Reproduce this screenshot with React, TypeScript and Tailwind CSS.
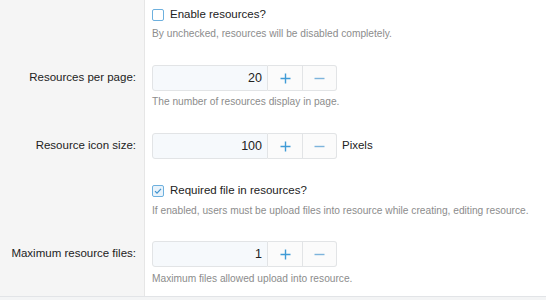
import React from "react";

const font = { fontFamily: '"Liberation Sans", Arial, sans-serif' };

function Stepper({ value }: { value: string }) {
  return (
    <div className="flex h-[26px]">
      <div className="w-[116px] h-full bg-[#f6f9fc] border border-[#e2e4e6] rounded-l-[3px] flex items-center justify-end pr-[5px] text-[12.5px] text-[#222]">
        {value}
      </div>
      <div className="w-[35px] h-full bg-[#fbfbfb] border-y border-r border-[#e2e4e6] flex items-center justify-center">
        <svg width="11" height="11" viewBox="0 0 11 11">
          <path d="M5.5 0.5v10M0.5 5.5h10" stroke="#3f9bd6" strokeWidth="1.4" />
        </svg>
      </div>
      <div className="w-[34px] h-full bg-[#fbfbfb] border-y border-r border-[#e2e4e6] rounded-r-[3px] flex items-center justify-center">
        <svg width="11" height="11" viewBox="0 0 11 11">
          <path d="M0.5 5.5h10" stroke="#7db4dc" strokeWidth="1.4" />
        </svg>
      </div>
    </div>
  );
}

function Check({ checked, label }: { checked: boolean; label: string }) {
  return (
    <div className="flex items-center h-[16px]">
      <div
        className={
          checked
            ? "w-[12px] h-[12px] border border-[#6db0de] bg-[#e9f3fb] rounded-[2px] flex items-center justify-center"
            : "w-[12px] h-[12px] border border-[#6db0de] bg-white rounded-[2px]"
        }
      >
        {checked && (
          <svg width="8" height="8" viewBox="0 0 8 8">
            <path d="M1 4.2l2 2 4-4.4" stroke="#3f93cf" strokeWidth="1.2" fill="none" />
          </svg>
        )}
      </div>
      <span className="ml-[6px] text-[11.5px] text-[#222] whitespace-nowrap">{label}</span>
    </div>
  );
}

function Hint({ children, mt }: { children: React.ReactNode; mt: string }) {
  return <div className={mt + " h-[14px] leading-[14px] text-[10.2px] text-[#8c8c8c] whitespace-nowrap"}>{children}</div>;
}

export default function App() {
  return (
    <div style={font} className="w-[546px] h-[300px] bg-[#f3f4f5] overflow-hidden">
      <div className="bg-white border-b border-[#e2e4e7]">
        {/* Row A */}
        <div className="flex">
          <div className="w-[145px] shrink-0 bg-[#f5f5f5] border-r border-[#e6e6e6]" />
          <div className="pl-[7px] pt-[7px]">
            <Check checked={false} label="Enable resources?" />
            <Hint mt="mt-[4px]">By unchecked, resources will be disabled completely.</Hint>
          </div>
        </div>
        {/* Row B */}
        <div className="flex">
          <div className="w-[145px] shrink-0 bg-[#f5f5f5] border-r border-[#e6e6e6] pt-[24px] pr-[8px]">
            <div className="h-[26px] flex items-center justify-end text-[11.5px] text-[#222] whitespace-nowrap">Resources per page:</div>
          </div>
          <div className="pl-[7px] pt-[24px]">
            <Stepper value="20" />
            <Hint mt="mt-[4px]">The number of resources display in page.</Hint>
          </div>
        </div>
        {/* Row C */}
        <div className="flex">
          <div className="w-[145px] shrink-0 bg-[#f5f5f5] border-r border-[#e6e6e6] pt-[24px] pr-[8px]">
            <div className="h-[26px] flex items-center justify-end text-[11.5px] text-[#222] whitespace-nowrap">Resource icon size:</div>
          </div>
          <div className="pl-[7px] pt-[24px] flex items-start">
            <Stepper value="100" />
            <div className="h-[26px] flex items-center ml-[5px] text-[11.5px] text-[#222]">Pixels</div>
          </div>
        </div>
        {/* Row D */}
        <div className="flex">
          <div className="w-[145px] shrink-0 bg-[#f5f5f5] border-r border-[#e6e6e6]" />
          <div className="pl-[7px] pt-[24px]">
            <Check checked={true} label="Required file in resources?" />
            <Hint mt="mt-[5px]">If enabled, users must be upload files into resource while creating, editing resource.</Hint>
          </div>
        </div>
        {/* Row E */}
        <div className="flex">
          <div className="w-[145px] shrink-0 bg-[#f5f5f5] border-r border-[#e6e6e6] pt-[23px] pr-[8px] pb-[10px]">
            <div className="h-[26px] flex items-center justify-end text-[11.5px] text-[#222] whitespace-nowrap">Maximum resource files:</div>
          </div>
          <div className="pl-[7px] pt-[23px] pb-[10px]">
            <Stepper value="1" />
            <Hint mt="mt-[5px]">Maximum files allowed upload into resource.</Hint>
          </div>
        </div>
      </div>
    </div>
  );
}
